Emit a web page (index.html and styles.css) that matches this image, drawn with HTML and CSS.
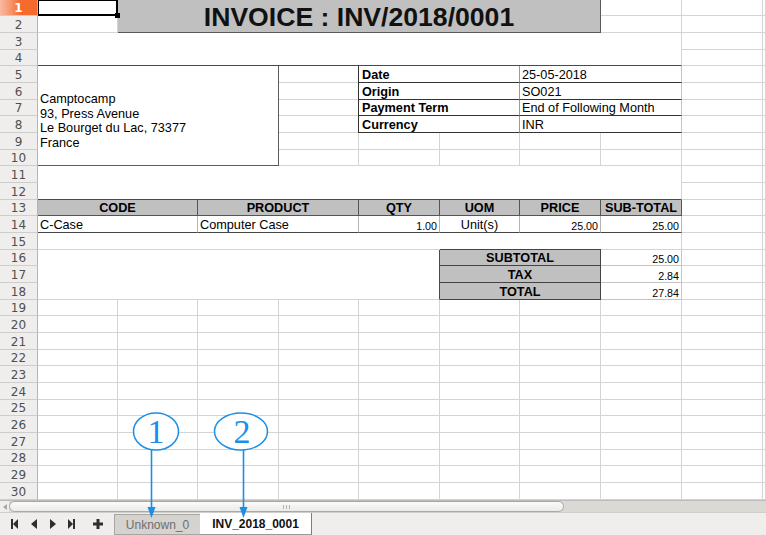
FILE: index.html
```html
<!DOCTYPE html>
<html>
<head>
<meta charset="utf-8">
<title>INV_2018_0001</title>
<link rel="stylesheet" href="styles.css">
</head>
<body>
<div class="app">
  <div class="sheet">
    <!-- 1 -->
    <div class="rh on">1</div>
    <div class="c sel"><i class="handle"></i></div>
    <div class="title">INVOICE : INV/2018/0001</div>
    <div class="c"></div><div class="c"></div><div class="c"></div>
    <!-- 2 -->
    <div class="rh">2</div>
    <div class="c"></div>
    <div class="c"></div><div class="c"></div><div class="c"></div>
    <!-- 3 -->
    <div class="rh">3</div>
    <div class="blank w8 h2 dark-b"></div>
    <div class="c"></div><div class="c"></div>
    <!-- 4 -->
    <div class="rh">4</div>
    <div class="c"></div><div class="c"></div>
    <!-- 5 -->
    <div class="rh">5</div>
    <div class="addr">
      <span>Camptocamp</span>
      <span>93, Press Avenue</span>
      <span>Le Bourget du Lac, 73377</span>
      <span>France</span>
    </div>
    <div class="c"></div>
    <div class="lbl">Date</div><div class="val">25-05-2018</div>
    <div class="c"></div><div class="c"></div>
    <!-- 6 -->
    <div class="rh">6</div>
    <div class="c"></div>
    <div class="lbl">Origin</div><div class="val">SO021</div>
    <div class="c"></div><div class="c"></div>
    <!-- 7 -->
    <div class="rh">7</div>
    <div class="c"></div>
    <div class="lbl">Payment Term</div><div class="val">End of Following Month</div>
    <div class="c"></div><div class="c"></div>
    <!-- 8 -->
    <div class="rh">8</div>
    <div class="c"></div>
    <div class="lbl">Currency</div><div class="val">INR</div>
    <div class="c"></div><div class="c"></div>
    <!-- 9 -->
    <div class="rh">9</div>
    <div class="c"></div><div class="c"></div><div class="c"></div><div class="c"></div><div class="c"></div><div class="c"></div><div class="c"></div>
    <!-- 10 -->
    <div class="rh">10</div>
    <div class="c"></div><div class="c"></div><div class="c"></div><div class="c"></div><div class="c"></div><div class="c"></div><div class="c"></div>
    <!-- 11 -->
    <div class="rh">11</div>
    <div class="blank w8 h2 dark-b"></div>
    <div class="c"></div><div class="c"></div>
    <!-- 12 -->
    <div class="rh">12</div>
    <div class="c"></div><div class="c"></div>
    <!-- 13 -->
    <div class="rh">13</div>
    <div class="th w2">CODE</div>
    <div class="th w2">PRODUCT</div>
    <div class="th">QTY</div>
    <div class="th">UOM</div>
    <div class="th">PRICE</div>
    <div class="th">SUB-TOTAL</div>
    <div class="c"></div><div class="c"></div>
    <!-- 14 -->
    <div class="rh">14</div>
    <div class="td w2">C-Case</div>
    <div class="td w2">Computer Case</div>
    <div class="td num">1.00</div>
    <div class="td ctr">Unit(s)</div>
    <div class="td num">25.00</div>
    <div class="td num">25.00</div>
    <div class="c"></div><div class="c"></div>
    <!-- 15 -->
    <div class="rh">15</div>
    <div class="blank w8"></div>
    <div class="c"></div><div class="c"></div>
    <!-- 16 -->
    <div class="rh">16</div>
    <div class="blank w5 h3 dark-r"></div>
    <div class="tl first">SUBTOTAL</div>
    <div class="tv">25.00</div>
    <div class="c"></div><div class="c"></div>
    <!-- 17 -->
    <div class="rh">17</div>
    <div class="tl">TAX</div>
    <div class="tv">2.84</div>
    <div class="c"></div><div class="c"></div>
    <!-- 18 -->
    <div class="rh">18</div>
    <div class="tl">TOTAL</div>
    <div class="tv">27.84</div>
    <div class="c"></div><div class="c"></div>
    <!-- 19 -->
    <div class="rh">19</div>
    <div class="c"></div><div class="c"></div><div class="c"></div><div class="c"></div><div class="c"></div><div class="c"></div><div class="c"></div><div class="c"></div><div class="c"></div><div class="c"></div>
    <!-- 20 -->
    <div class="rh">20</div>
    <div class="c"></div><div class="c"></div><div class="c"></div><div class="c"></div><div class="c"></div><div class="c"></div><div class="c"></div><div class="c"></div><div class="c"></div><div class="c"></div>
    <!-- 21 -->
    <div class="rh">21</div>
    <div class="c"></div><div class="c"></div><div class="c"></div><div class="c"></div><div class="c"></div><div class="c"></div><div class="c"></div><div class="c"></div><div class="c"></div><div class="c"></div>
    <!-- 22 -->
    <div class="rh">22</div>
    <div class="c"></div><div class="c"></div><div class="c"></div><div class="c"></div><div class="c"></div><div class="c"></div><div class="c"></div><div class="c"></div><div class="c"></div><div class="c"></div>
    <!-- 23 -->
    <div class="rh">23</div>
    <div class="c"></div><div class="c"></div><div class="c"></div><div class="c"></div><div class="c"></div><div class="c"></div><div class="c"></div><div class="c"></div><div class="c"></div><div class="c"></div>
    <!-- 24 -->
    <div class="rh">24</div>
    <div class="c"></div><div class="c"></div><div class="c"></div><div class="c"></div><div class="c"></div><div class="c"></div><div class="c"></div><div class="c"></div><div class="c"></div><div class="c"></div>
    <!-- 25 -->
    <div class="rh">25</div>
    <div class="c"></div><div class="c"></div><div class="c"></div><div class="c"></div><div class="c"></div><div class="c"></div><div class="c"></div><div class="c"></div><div class="c"></div><div class="c"></div>
    <!-- 26 -->
    <div class="rh">26</div>
    <div class="c"></div><div class="c"></div><div class="c"></div><div class="c"></div><div class="c"></div><div class="c"></div><div class="c"></div><div class="c"></div><div class="c"></div><div class="c"></div>
    <!-- 27 -->
    <div class="rh">27</div>
    <div class="c"></div><div class="c"></div><div class="c"></div><div class="c"></div><div class="c"></div><div class="c"></div><div class="c"></div><div class="c"></div><div class="c"></div><div class="c"></div>
    <!-- 28 -->
    <div class="rh">28</div>
    <div class="c"></div><div class="c"></div><div class="c"></div><div class="c"></div><div class="c"></div><div class="c"></div><div class="c"></div><div class="c"></div><div class="c"></div><div class="c"></div>
    <!-- 29 -->
    <div class="rh">29</div>
    <div class="c"></div><div class="c"></div><div class="c"></div><div class="c"></div><div class="c"></div><div class="c"></div><div class="c"></div><div class="c"></div><div class="c"></div><div class="c"></div>
    <!-- 30 -->
    <div class="rh">30</div>
    <div class="c"></div><div class="c"></div><div class="c"></div><div class="c"></div><div class="c"></div><div class="c"></div><div class="c"></div><div class="c"></div><div class="c"></div><div class="c"></div>
  </div>

  <div class="hscroll">
    <div class="sb-btn"><svg width="4" height="6" viewBox="0 0 4 6"><path d="M4 0V6L0 3Z" fill="#a8a8a8"/></svg></div>
    <div class="sb-thumb"><span class="grip"></span></div>
    <div class="sb-trough"></div>
  </div>

  <div class="tabbar">
    <div class="nav">
      <span class="nav-btn"><svg width="7" height="10" viewBox="0 0 7 10"><rect x="0" y="0" width="2" height="10"/><path d="M7 0V10L2 5Z"/></svg></span>
      <span class="nav-btn"><svg width="6" height="10" viewBox="0 0 6 10"><path d="M6 0V10L0 5Z"/></svg></span>
      <span class="nav-btn"><svg width="6" height="10" viewBox="0 0 6 10"><path d="M0 0V10L6 5Z"/></svg></span>
      <span class="nav-btn"><svg width="7" height="10" viewBox="0 0 7 10"><path d="M0 0V10L5 5Z"/><rect x="5" y="0" width="2" height="10"/></svg></span>
      <span class="nav-btn plus"><svg width="10" height="10" viewBox="0 0 10 10"><path d="M3.5 0h3v3.5H10v3H6.5V10h-3V6.5H0v-3h3.5z"/></svg></span>
    </div>
    <div class="tab">Unknown_0</div>
    <div class="tab active">INV_2018_0001</div>
  </div>
</div>

<svg class="annot" width="766" height="535" viewBox="0 0 766 535">
  <ellipse cx="156" cy="431.5" rx="22.5" ry="18.5" fill="#fff" stroke="#1b8fe6" stroke-width="1.5"/>
  <text x="156" y="443" text-anchor="middle" class="anum">1</text>
  <ellipse cx="241" cy="431.5" rx="26.5" ry="18.5" fill="#fff" stroke="#1b8fe6" stroke-width="1.5"/>
  <text x="242" y="443" text-anchor="middle" class="anum">2</text>
  <line x1="151.5" y1="450" x2="151.5" y2="509" stroke="#1b8fe6" stroke-width="1.6"/>
  <path d="M147.5 507H155.5L151.5 518Z" fill="#1b8fe6"/>
  <line x1="243.5" y1="450" x2="243.5" y2="509" stroke="#1b8fe6" stroke-width="1.6"/>
  <path d="M239.5 507H247.5L243.5 518Z" fill="#1b8fe6"/>
</svg>
</body>
</html>
```

FILE: styles.css
```css
* { box-sizing: border-box; margin: 0; padding: 0; }
html, body { width: 766px; height: 535px; overflow: hidden; background: #fff; }
body {
  font-family: "Liberation Sans", Arial, sans-serif;
  font-size: 12.7px;
  color: #000;
  position: relative;
}
.app { display: flex; flex-direction: column; height: 535px; }

.sheet {
  flex: none;
  height: 500px;
  display: grid;
  grid-template-columns: 38px 80px 80px 81px 80px 81px 80px 81px 81px 81px 1fr;
  grid-template-rows: repeat(10, 16px 17px 17px);
}
.sheet > div {
  display: flex;
  align-items: center;
  min-width: 0;
  overflow: hidden;
  white-space: nowrap;
  padding-top: 1px;
  border-right: 1px solid #d4d4d4;
  border-bottom: 1px solid #d4d4d4;
  background: #fff;
}

/* row headers */
.sheet > .rh {
  justify-content: center;
  padding-top: 1px;
  background: #efeeec;
  color: #505050;
  font-family: "DejaVu Sans", sans-serif;
  font-size: 12px;
  border-right: 1px solid #b4b4b4;
  border-bottom: 1px solid #cdcdcd;
}
.sheet > .rh.on {
  background: linear-gradient(90deg, #f9b9a1 0%, #f7936a 30%, #f46b2e 55%, #f46a2c 100%);
  color: #fff;
  font-weight: bold;
}

/* selected cell */
.sheet > .sel {
  position: relative;
  overflow: visible;
  z-index: 2;
  border-right: 1px solid #000;
  border-bottom: 1px solid #000;
  box-shadow: inset 0 0 0 1px #000;
}
.handle {
  position: absolute;
  right: -3px;
  bottom: -3px;
  width: 5px;
  height: 5px;
  background: #000;
}

/* spans */
.w2 { grid-column: span 2; }
.w5 { grid-column: span 5; }
.w8 { grid-column: span 8; }
.h2 { grid-row: span 2; }
.h3 { grid-row: span 3; }

.sheet > .title {
  grid-column: span 6;
  grid-row: span 2;
  justify-content: center;
  padding-top: 2px;
  background: #c0c0c0;
  font-size: 26.6px;
  font-weight: bold;
  color: #111;
  border-right: 1px solid #5a5a5a;
  border-bottom: 1px solid #5a5a5a;
  box-shadow: -1px 0 0 #5a5a5a;
}

.sheet > .blank { border-right-color: #fff; }
.sheet > .blank.w8 { border-right-color: #d4d4d4; }
.sheet > .dark-b { border-bottom: 1px solid #4a4a4a; }
.sheet > .dark-r { border-right: 1px solid #4a4a4a; border-bottom-color: #d4d4d4; }

/* address box */
.sheet > .addr {
  grid-column: span 3;
  grid-row: span 6;
  flex-direction: column;
  align-items: flex-start;
  justify-content: flex-start;
  padding: 26px 0 0 2px;
  line-height: 14.7px;
  border-right: 1px solid #5c5c5c;
  border-bottom: 1px solid #5c5c5c;
}

/* info table */
.sheet > .lbl {
  grid-column: span 2;
  padding-left: 3px;
  font-weight: bold;
  border-right: 1px solid #9a9a9a;
  border-bottom: 1px solid #333;
  box-shadow: -1px 0 0 #333;
}
.sheet > .val {
  grid-column: span 2;
  padding-left: 2px;
  border-right: 1px solid #c4c4c4;
  border-bottom: 1px solid #333;
}

/* item table */
.sheet > .th {
  justify-content: center;
  background: #c0c0c0;
  font-weight: bold;
  border-right: 1px solid #555;
  border-bottom: 1px solid #555;
}
.sheet > .td {
  padding-left: 2px;
  border-right: 1px solid #b4b4b4;
  border-bottom: 1px solid #444;
}
.sheet > .num {
  justify-content: flex-end;
  align-items: flex-end;
  padding: 0 2px 0 0;
  font-size: 10.7px;
}
.sheet > .ctr { justify-content: center; padding-left: 0; }

/* totals */
.sheet > .tl {
  grid-column: span 2;
  justify-content: center;
  background: #c0c0c0;
  font-weight: bold;
  border-right: 1px solid #444;
  border-bottom: 1px solid #444;
}
.sheet > .tl.first { box-shadow: 0 -1px 0 #444; }
.sheet > .tv {
  justify-content: flex-end;
  align-items: flex-end;
  padding: 0 2px 0 0;
  font-size: 10.7px;
  border-right: 1px solid #c4c4c4;
  border-bottom: 1px solid #c4c4c4;
}

/* scrollbar */
.hscroll {
  flex: none;
  height: 13px;
  display: flex;
  background: #dbd9d5;
  border-top: 1px solid #bdbbb7;
  border-bottom: 1px solid #d0cecb;
}
.sb-btn {
  width: 9px;
  display: flex;
  align-items: center;
  justify-content: center;
  background: #efeeec;
}
.sb-thumb {
  width: 555px;
  height: 11px;
  display: flex;
  align-items: center;
  justify-content: center;
  background: linear-gradient(#fbfbfa, #ecebe8);
  border: 1px solid #aaa8a4;
  border-radius: 6px;
}
.grip {
  width: 7px;
  height: 4px;
  background: repeating-linear-gradient(90deg, #b4b2ae 0 1px, transparent 1px 3px);
}
.sb-trough { flex: 1; }

/* tabs */
.tabbar {
  flex: 1;
  display: flex;
  align-items: stretch;
  background: #efeeec;
}
.nav {
  display: flex;
  align-items: center;
  padding-left: 5px;
  width: 114px;
}
.nav-btn {
  width: 19px;
  display: flex;
  justify-content: center;
  fill: #2e2e2e;
}
.nav-btn.plus { margin-left: 7px; }
.tab {
  display: flex;
  align-items: center;
  justify-content: center;
  font-size: 12px;
  width: 86px;
  background: #d5d3cf;
  color: #6e6e6e;
  border: 1px solid #a8a6a2;
  border-right: none;
  margin-top: 1px;
}
.tab.active {
  width: 112px;
  background: #fff;
  color: #111;
  font-weight: bold;
  border: none;
  border-right: 1px solid #7d7d7d;
  border-bottom: 1px solid #9a9a9a;
  margin-top: 0;
}

/* annotations overlay */
.annot {
  position: absolute;
  left: 0;
  top: 0;
  pointer-events: none;
}
.anum {
  font-family: "Liberation Serif", "Times New Roman", serif;
  font-size: 34px;
  fill: #1b8fe6;
}
```
